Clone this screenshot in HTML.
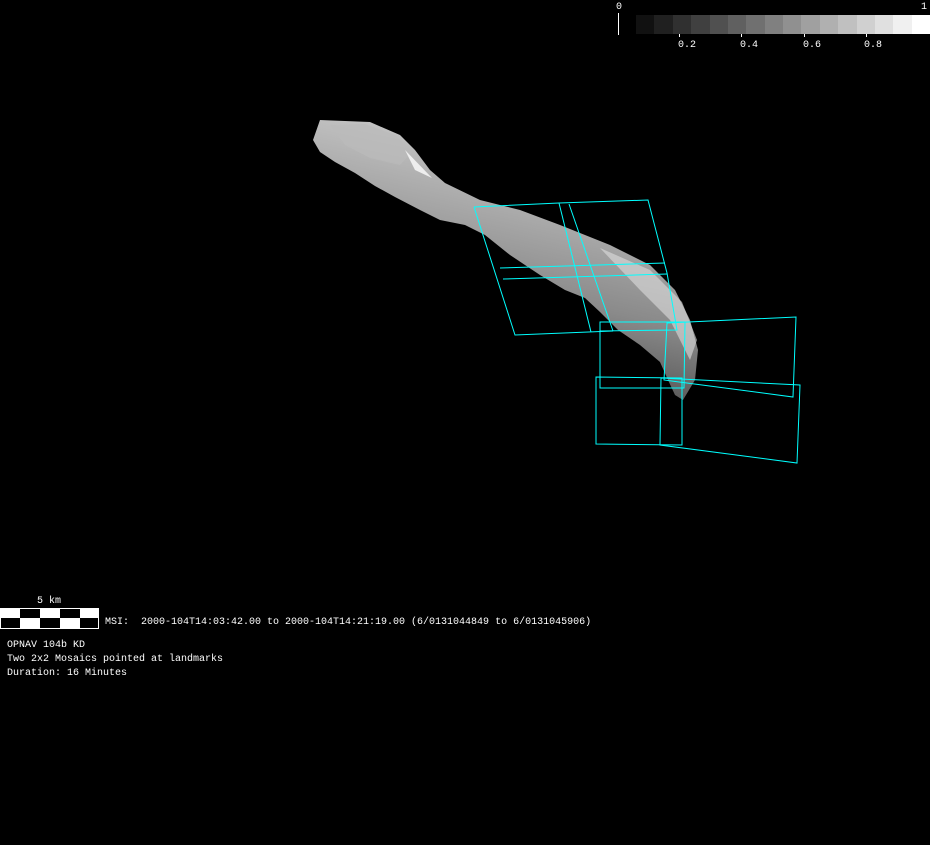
<!DOCTYPE html>
<html><head><style>
html,body{margin:0;padding:0;background:#000;width:930px;height:845px;overflow:hidden;position:relative}
.t{position:absolute;color:#fff;font-family:"Liberation Mono","DejaVu Sans Mono",monospace;font-size:10px;line-height:12px;white-space:pre}
</style></head><body>
<svg width="930" height="845" style="position:absolute;left:0;top:0">
<defs>
<linearGradient id="g" x1="0.3" y1="0" x2="0" y2="1">
<stop offset="0" stop-color="#c8c8c8"/><stop offset="0.5" stop-color="#8a8a8a"/><stop offset="1" stop-color="#2a2a2a"/>
</linearGradient>
</defs>
<polygon fill="url(#g)" points="320,120 370,122 400,135 415,150 430,170 445,183 480,200 520,210 560,225 610,245 650,265 675,290 690,320 698,350 695,380 683,400 675,395 668,380 660,362 640,345 618,330 600,312 585,298 565,290 540,275 510,255 485,235 465,225 440,220 420,210 395,197 375,186 355,173 335,162 320,152 313,140"/>
<polygon fill="#bbb" opacity="0.7" points="330,125 365,124 395,135 412,152 400,165 370,158 345,145"/>
<polygon fill="#eee" points="405,150 432,178 415,170"/>
<polygon fill="#ddd" opacity="0.6" points="600,248 650,270 682,302 697,340 690,360 670,320 640,290"/>
<g fill="none" stroke="#00ffff" stroke-width="1">
<polyline points="474,207 559,203 648,200 667,273 677,330 600,331"/>
<polyline points="474,207 515,335 613,331"/>
<line x1="559" y1="203" x2="591" y2="332"/>
<line x1="569" y1="204" x2="613" y2="331"/>
<line x1="500" y1="268" x2="665" y2="263"/>
<line x1="503" y1="279" x2="667" y2="274"/>
<polygon points="600,322 685,322 684,388 600,388"/>
<polygon points="667,323 796,317 793,397 664,380"/>
<polygon points="596,377 682,378 682,445 596,444"/>
<polygon points="661,378 800,385 797,463 660,445"/>
</g>
<line x1="618.5" y1="13" x2="618.5" y2="35" stroke="#fff"/>
<g stroke="#fff"><line x1="679.5" y1="34" x2="679.5" y2="37"/><line x1="741.5" y1="34" x2="741.5" y2="37"/><line x1="804.5" y1="34" x2="804.5" y2="37"/><line x1="866.5" y1="34" x2="866.5" y2="37"/></g>
<rect x="0.5" y="608.5" width="98" height="20" fill="#000" stroke="#fff"/>
<g fill="#fff">
<rect x="0" y="608" width="20" height="10"/><rect x="40" y="608" width="20" height="10"/><rect x="80" y="608" width="19" height="10"/>
<rect x="20" y="618" width="20" height="10"/><rect x="60" y="618" width="20" height="10"/>
</g>
</svg>
<div style="position:absolute;left:636px;top:15px;width:294px;height:19px;display:flex">
<div style="flex:1;background:#111"></div><div style="flex:1;background:#202020"></div><div style="flex:1;background:#303030"></div><div style="flex:1;background:#404040"></div><div style="flex:1;background:#505050"></div><div style="flex:1;background:#606060"></div><div style="flex:1;background:#707070"></div><div style="flex:1;background:#808080"></div><div style="flex:1;background:#909090"></div><div style="flex:1;background:#a0a0a0"></div><div style="flex:1;background:#b0b0b0"></div><div style="flex:1;background:#c0c0c0"></div><div style="flex:1;background:#d0d0d0"></div><div style="flex:1;background:#e0e0e0"></div><div style="flex:1;background:#f0f0f0"></div><div style="flex:1;background:#fff"></div>
</div>
<div class="t" style="left:616px;top:2px">0</div>
<div class="t" style="left:921px;top:2px">1</div>
<div class="t" style="left:678px;top:40px">0.2</div>
<div class="t" style="left:740px;top:40px">0.4</div>
<div class="t" style="left:803px;top:40px">0.6</div>
<div class="t" style="left:864px;top:40px">0.8</div>
<div class="t" style="left:37px;top:596px">5 km</div>
<div class="t" style="left:105px;top:617px">MSI:  2000-104T14:03:42.00 to 2000-104T14:21:19.00 (6/0131044849 to 6/0131045906)</div>
<div class="t" style="left:7px;top:640px">OPNAV 104b KD</div>
<div class="t" style="left:7px;top:654px">Two 2x2 Mosaics pointed at landmarks</div>
<div class="t" style="left:7px;top:668px">Duration: 16 Minutes</div>
</body></html>
